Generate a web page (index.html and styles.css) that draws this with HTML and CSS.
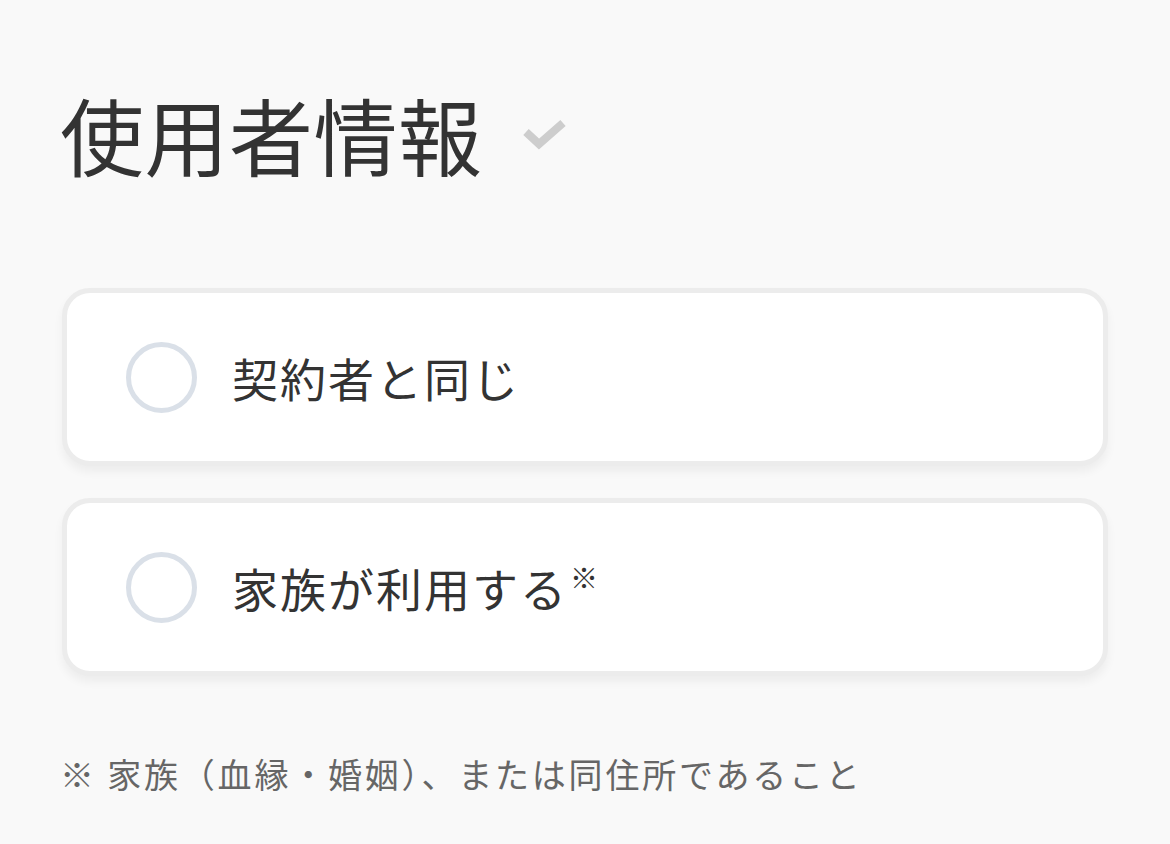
FILE: index.html
```html
<!DOCTYPE html>
<html lang="ja">
<head>
<meta charset="utf-8">
<link rel="stylesheet" href="styles.css">
</head>
<body>
<div class="page">
  <div class="title-row">
    <h1 class="title">使用者情報</h1>
    <svg class="check" width="44" height="32" viewBox="0 0 44 32"><path d="M4 14 L17 26 L41 5" fill="none" stroke="#cdcdcd" stroke-width="8"/></svg>
  </div>
  <div class="options">
    <label class="card">
      <span class="radio"></span>
      <span class="label">契約者と同じ</span>
    </label>
    <label class="card">
      <span class="radio"></span>
      <span class="label">家族が利用する<sup class="mark">※</sup></span>
    </label>
  </div>
  <p class="note">※ 家族（血縁・婚姻）、または同住所であること</p>
</div>
</body>
</html>
```
FILE: styles.css
```css
html, body {
  margin: 0;
  padding: 0;
  background: #f9f9f9;
}
body {
  font-family: "Noto Sans CJK JP", "Noto Sans", sans-serif;
  color: #333;
}
.page {
  padding: 90px 62px 0 62px;
}
.title-row {
  display: flex;
  align-items: center;
  gap: 39px;
  height: 88px;
}
.title {
  margin: 0;
  font-size: 84px;
  font-weight: 400;
  line-height: 88px;
  letter-spacing: 0.5px;
  margin-left: -2px;
  color: #333;
}
.check {
  display: block;
  margin-top: 0;
}
.options {
  margin-top: 110px;
  display: flex;
  flex-direction: column;
  gap: 32px;
  width: 1046px;
}
.card {
  box-sizing: border-box;
  height: 178px;
  background: #fff;
  border: 5px solid #ececec;
  border-radius: 28px;
  box-shadow: 0 6px 10px rgba(0, 0, 0, 0.05);
  display: flex;
  align-items: center;
  padding-left: 59px;
}
.radio {
  box-sizing: border-box;
  width: 71px;
  height: 71px;
  border-radius: 50%;
  border: 5px solid #dae0e8;
  flex: none;
}
.label {
  margin-left: 35px;
  font-size: 46px;
  line-height: 60px;
  color: #333;
  letter-spacing: 2px;
}
.mark {
  font-size: 28px;
  vertical-align: top;
  position: relative;
  top: -10px;
  margin-left: 2px;
}
.note {
  margin: 76px 0 0 0;
  font-size: 34px;
  line-height: 44px;
  color: #666;
  letter-spacing: 2.8px;
  margin-left: -2px;
}
```
